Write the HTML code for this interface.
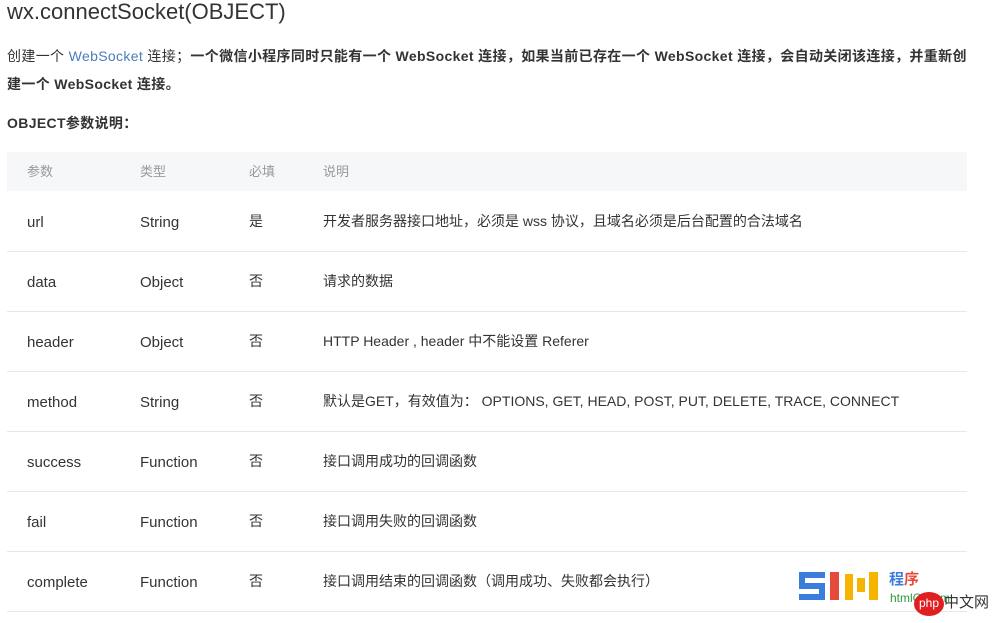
<!DOCTYPE html>
<html><head><meta charset="utf-8"><style>
body{margin:0;width:1003px;height:623px;background:#fff;overflow:hidden;font-family:"Liberation Sans","Noto Sans CJK SC",sans-serif;color:#333;position:relative}
.a{position:absolute;white-space:nowrap;line-height:20px}
h1{position:absolute;left:7px;top:-1px;margin:0;font-weight:normal;font-size:22px;color:#333}
.p{font-size:14px;letter-spacing:0.35px}
b{font-weight:bold}
.hd{position:absolute;left:7px;top:152px;width:960px;height:39px;background:#f6f7f9}
.ln{position:absolute;left:7px;width:960px;height:1px;background:#e7e7e7}
.t{font-size:14px;color:#333}
.l{font-size:15px;margin-top:2px}
.h{font-size:13px;color:#999}
</style></head><body>
<h1>wx.connectSocket(OBJECT)</h1>
<div class="a p" style="left:7px;top:46px">创建一个 <span style="color:#4a7dbd">WebSocket</span> 连接；<b>一个微信小程序同时只能有一个 WebSocket 连接，如果当前已存在一个 WebSocket 连接，会自动关闭该连接，并重新创</b></div>
<div class="a p" style="left:7px;top:74px"><b>建一个 WebSocket 连接。</b></div>
<div class="a p" style="left:7px;top:113px"><b>OBJECT参数说明：</b></div>
<div class="hd"></div>
<div class="a h" style="left:27px;top:162px">参数</div>
<div class="a h" style="left:140px;top:162px">类型</div>
<div class="a h" style="left:249px;top:162px">必填</div>
<div class="a h" style="left:323px;top:162px">说明</div>

<div class="a t l" style="left:27px;top:211px">url</div><div class="a t l" style="left:140px;top:211px">String</div><div class="a t" style="left:249px;top:211px">是</div><div class="a t" style="left:323px;top:211px">开发者服务器接口地址，必须是 wss 协议，且域名必须是后台配置的合法域名</div>
<div class="ln" style="top:251px"></div>
<div class="a t l" style="left:27px;top:271px">data</div><div class="a t l" style="left:140px;top:271px">Object</div><div class="a t" style="left:249px;top:271px">否</div><div class="a t" style="left:323px;top:271px">请求的数据</div>
<div class="ln" style="top:311px"></div>
<div class="a t l" style="left:27px;top:331px">header</div><div class="a t l" style="left:140px;top:331px">Object</div><div class="a t" style="left:249px;top:331px">否</div><div class="a t" style="left:323px;top:331px">HTTP Header , header 中不能设置 Referer</div>
<div class="ln" style="top:371px"></div>
<div class="a t l" style="left:27px;top:391px">method</div><div class="a t l" style="left:140px;top:391px">String</div><div class="a t" style="left:249px;top:391px">否</div><div class="a t" style="left:323px;top:391px">默认是GET，有效值为： OPTIONS, GET, HEAD, POST, PUT, DELETE, TRACE, CONNECT</div>
<div class="ln" style="top:431px"></div>
<div class="a t l" style="left:27px;top:451px">success</div><div class="a t l" style="left:140px;top:451px">Function</div><div class="a t" style="left:249px;top:451px">否</div><div class="a t" style="left:323px;top:451px">接口调用成功的回调函数</div>
<div class="ln" style="top:491px"></div>
<div class="a t l" style="left:27px;top:511px">fail</div><div class="a t l" style="left:140px;top:511px">Function</div><div class="a t" style="left:249px;top:511px">否</div><div class="a t" style="left:323px;top:511px">接口调用失败的回调函数</div>
<div class="ln" style="top:551px"></div>
<div class="a t l" style="left:27px;top:571px">complete</div><div class="a t l" style="left:140px;top:571px">Function</div><div class="a t" style="left:249px;top:571px">否</div><div class="a t" style="left:323px;top:571px">接口调用结束的回调函数（调用成功、失败都会执行）</div>
<div class="ln" style="top:611px"></div>

<div class="a" style="left:799px;top:572px;width:26px;height:28px;background:#3b7ddd"></div>
<div class="a" style="left:805px;top:578px;width:20px;height:5px;background:#fff"></div>
<div class="a" style="left:799px;top:589px;width:20px;height:5px;background:#fff"></div>
<div class="a" style="left:830px;top:572px;width:9px;height:28px;background:#e54a3a"></div>
<div class="a" style="left:845px;top:574px;width:8px;height:26px;background:#f4b400"></div>
<div class="a" style="left:857px;top:578px;width:8px;height:14px;background:#f4b400"></div>
<div class="a" style="left:869px;top:572px;width:9px;height:28px;background:#f4b400"></div>
<div class="a" style="left:889px;top:570px;font-size:15px;font-weight:bold;color:#3b7ddd">程<span style="color:#e54a3a">序</span></div>
<div class="a" style="left:890px;top:588px;font-size:12px;color:#2a9a3a">htmlCl.com</div>
<div class="a" style="left:914px;top:592px;width:30px;height:24px;border-radius:50%;background:#e02020;color:#fff;font-size:12px;text-align:center;line-height:22px">php</div>
<div class="a" style="left:944px;top:593px;font-size:15px;color:#333">中文网</div>
</body></html>
